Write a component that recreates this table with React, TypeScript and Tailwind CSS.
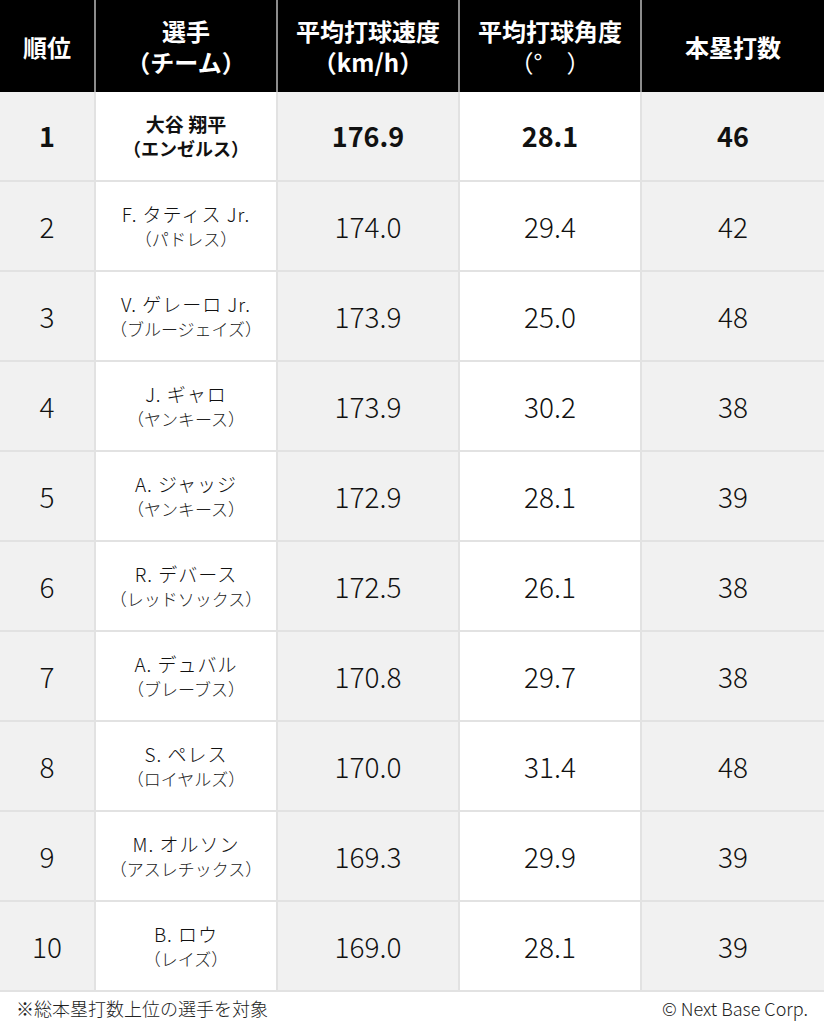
import React from 'react';

interface Row {
  rank: number;
  name: string;
  team: string;
  speed: string;
  angle: string;
  hr: number;
}

const rows: Row[] = [
  { rank: 1, name: '大谷 翔平', team: '（エンゼルス）', speed: '176.9', angle: '28.1', hr: 46 },
  { rank: 2, name: 'F. タティス Jr.', team: '（パドレス）', speed: '174.0', angle: '29.4', hr: 42 },
  { rank: 3, name: 'V. ゲレーロ Jr.', team: '（ブルージェイズ）', speed: '173.9', angle: '25.0', hr: 48 },
  { rank: 4, name: 'J. ギャロ', team: '（ヤンキース）', speed: '173.9', angle: '30.2', hr: 38 },
  { rank: 5, name: 'A. ジャッジ', team: '（ヤンキース）', speed: '172.9', angle: '28.1', hr: 39 },
  { rank: 6, name: 'R. デバース', team: '（レッドソックス）', speed: '172.5', angle: '26.1', hr: 38 },
  { rank: 7, name: 'A. デュバル', team: '（ブレーブス）', speed: '170.8', angle: '29.7', hr: 38 },
  { rank: 8, name: 'S. ペレス', team: '（ロイヤルズ）', speed: '170.0', angle: '31.4', hr: 48 },
  { rank: 9, name: 'M. オルソン', team: '（アスレチックス）', speed: '169.3', angle: '29.9', hr: 39 },
  { rank: 10, name: 'B. ロウ', team: '（レイズ）', speed: '169.0', angle: '28.1', hr: 39 },
];

const font = { fontFamily: '"Noto Sans CJK JP", "Noto Sans", sans-serif' };

const head = 'h-[92px] bg-black text-white font-bold text-[24px] leading-[31px] flex flex-col items-center justify-center';

const App = () => {
  return (
    <div className="w-[826px] h-[1027px] bg-white text-[#111]" style={font}>
      <div className="w-[824px] grid grid-cols-[96px_182px_182px_182px_182px]">
        {/* header */}
        <div className={`${head} border-r-2 border-[#8c8c8c]`}>順位</div>
        <div className={`${head} border-r-2 border-[#8c8c8c]`}>
          <span>選手</span>
          <span>（チーム）</span>
        </div>
        <div className={`${head} border-r-2 border-[#8c8c8c]`}>
          <span>平均打球速度</span>
          <span>（km/h）</span>
        </div>
        <div className={`${head} border-r-2 border-[#8c8c8c]`}>
          <span>平均打球角度</span>
          <span className="font-normal">（°　）</span>
        </div>
        <div className={head}>本塁打数</div>

        {rows.map((r) => {
          const top = r.rank === 1;
          const num = top ? 'font-bold text-[27px]' : 'font-light text-[28px]';
          return (
            <React.Fragment key={r.rank}>
              <div className={`h-[90px] bg-[#f1f1f1] border-r-2 border-b-2 border-[#e2e2e2] flex items-center justify-center ${num}`}>
                {r.rank}
              </div>
              <div className={`h-[90px] bg-white border-r-2 border-b-2 border-[#e2e2e2] flex flex-col items-center justify-center ${top ? 'font-bold' : 'font-light'}`}>
                <span className={`text-[19px] leading-[25px] ${top ? '' : 'tracking-[1px]'}`}>{r.name}</span>
                <span className={`leading-[25px] ${top ? 'text-[18px]' : 'text-[17px] text-[#222]'}`}>{r.team}</span>
              </div>
              <div className={`h-[90px] bg-[#f1f1f1] border-r-2 border-b-2 border-[#e2e2e2] flex items-center justify-center ${num}`}>
                {r.speed}
              </div>
              <div className={`h-[90px] bg-white border-r-2 border-b-2 border-[#e2e2e2] flex items-center justify-center ${num}`}>
                {r.angle}
              </div>
              <div className={`h-[90px] bg-[#f1f1f1] border-b-2 border-[#e2e2e2] flex items-center justify-center ${num}`}>
                {r.hr}
              </div>
            </React.Fragment>
          );
        })}
      </div>
      <div className="w-[824px] flex justify-between items-center pl-[16px] pr-[16px] pt-[3px] text-[18px] font-light text-[#222]">
        <span>※総本塁打数上位の選手を対象</span>
        <span>© Next Base Corp.</span>
      </div>
    </div>
  );
};

export default App;
